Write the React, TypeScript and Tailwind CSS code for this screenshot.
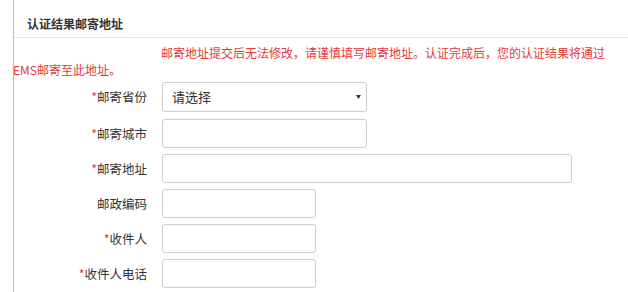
import React from "react";

const font = { fontFamily: '"Noto Sans CJK SC", "Microsoft YaHei", sans-serif' };

function Row({ label, required, width, select, mt }: { label: string; required?: boolean; width: string; select?: boolean; mt: string }) {
  return (
    <div className={`flex items-center ${mt}`}>
      <div className="w-[133px] text-right text-[12.5px] leading-[16px] text-[#333]">
        {required && <span className="text-[#e4393c]">*</span>}
        {label}
      </div>
      <div className="ml-[15px]">
        {select ? (
          <div className={`${width} h-[30px] border border-[#ccc] rounded-[3px] flex items-center justify-between pl-[9px] pr-[5px] text-[13px] text-[#333]`}>
            <span>请选择</span>
            <svg width="5" height="4" viewBox="0 0 5 4"><path d="M0 0 L5 0 L2.5 4 Z" fill="#333" /></svg>
          </div>
        ) : (
          <div className={`${width} h-[29px] border border-[#ccc] rounded-[3px] bg-white`} />
        )}
      </div>
    </div>
  );
}

export default function App() {
  return (
    <div className="w-[628px] h-[292px] bg-white overflow-hidden pl-[13px]" style={font}>
      <div className="h-full border-l border-[#bbb]">
        <div className="h-[38px] border-b border-[#e6e6e6] pl-[13px] pt-[16px] text-[12px] leading-[16px] font-semibold text-[#333]">
          认证结果邮寄地址
        </div>
        <p className="pt-[6px] text-[12px] leading-[17px] text-[#e4393c] indent-[147px]">
          邮寄地址提交后无法修改，请谨慎填写邮寄地址。认证完成后，您的认证结果将通过
          <br />
          <span className="-ml-[1px]">EMS邮寄至此地址。</span>
        </p>
        <Row label="邮寄省份" required select width="w-[205px]" mt="mt-[4px]" />
        <Row label="邮寄城市" required width="w-[205px]" mt="mt-[7px]" />
        <Row label="邮寄地址" required width="w-[410px]" mt="mt-[6px]" />
        <Row label="邮政编码" width="w-[154px]" mt="mt-[6px]" />
        <Row label="收件人" required width="w-[154px]" mt="mt-[6px]" />
        <Row label="收件人电话" required width="w-[154px]" mt="mt-[6px]" />
      </div>
    </div>
  );
}
